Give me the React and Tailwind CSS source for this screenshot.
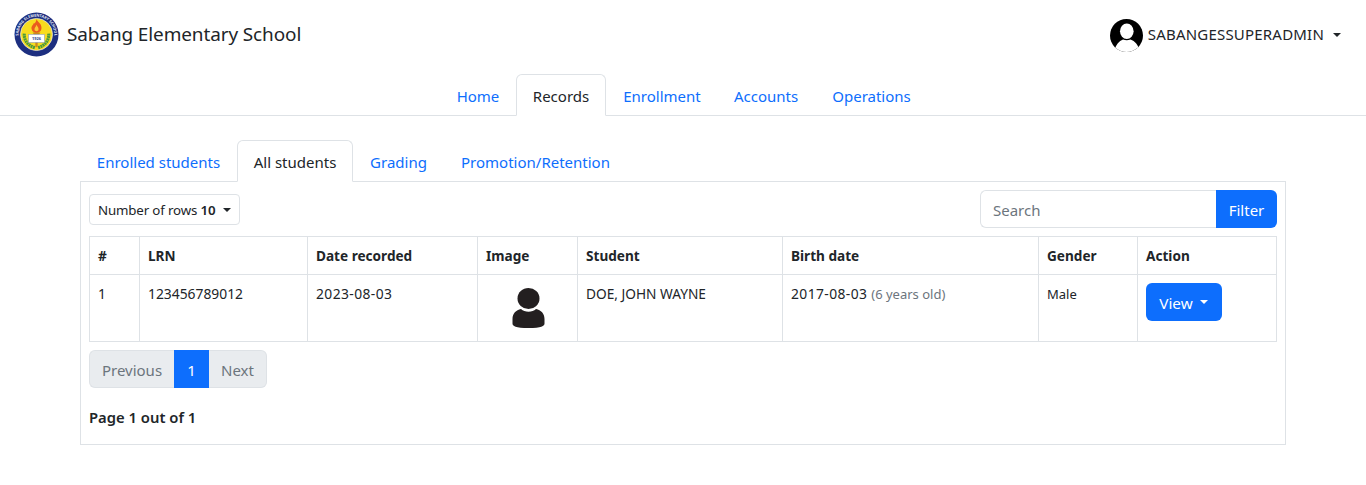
import React from "react";

const Caret = ({ className = "" }) => (
  <span className={`inline-block w-0 h-0 border-t-[4.8px] border-x-[4.8px] border-x-transparent border-t-current ${className}`} />
);

const Logo = () => (
  <svg width="45" height="45" viewBox="0 0 46 46" className="shrink-0">
    <defs>
      <path id="ringTop" d="M5.700 29a18.300 18.300 0 1 1 34.600 0" />
    </defs>
    <circle cx="23" cy="23" r="22.500" fill="#1d2f80" />
    <text fill="#e6e9f4" fontSize="3.900" fontWeight="700" fontFamily="'Noto Sans',sans-serif">
      <textPath href="#ringTop" startOffset="50%" textAnchor="middle">SABANG ELEMENTARY SCHOOL</textPath>
    </text>
    <circle cx="23" cy="23" r="16.400" fill="#f8dc1f" stroke="#e9edf5" strokeWidth=".7" />
    <path d="M10.500 22c-.5 7 4 12.500 11 14.500M35.500 22c.5 7-4 12.500-11 14.500" fill="none" stroke="#4b9a3d" strokeWidth="3.200" strokeDasharray="2 .5" />
    <path d="M23 7.500c1 3 6 4.500 5 10-.5 2.500-2.500 4-5 4s-4.500-1.500-5-4c-.6-3.500 1.500-3.500 2-6 1 1 2.500-1 3-4z" fill="#ea5b1d" />
    <path d="M23 13c1 2.200 2.500 3 2 5.500-.3 1.500-3.700 1.500-4 0-.4-2.500 1.500-3.300 2-5.500z" fill="#fbc933" />
    <path d="M19 21h8l-2 3h-4z" fill="#c98a1c" />
    <rect x="21.800" y="29" width="2.400" height="7" fill="#c98a1c" />
    <rect x="15" y="23" width="16" height="8" fill="#ffffff" stroke="#8ea0cc" strokeWidth=".6" />
    <text x="23" y="28.600" textAnchor="middle" fontSize="4" fontWeight="700" fill="#27408b" fontFamily="'Noto Sans',sans-serif">1926</text>
  </svg>
);

const Avatar = () => (
  <svg width="33" height="33" viewBox="0 0 33 33" className="shrink-0">
    <defs>
      <clipPath id="av"><circle cx="16.500" cy="16.500" r="16.500" /></clipPath>
    </defs>
    <g clipPath="url(#av)">
      <rect width="33" height="33" fill="#000" />
      <ellipse cx="16.800" cy="12.200" rx="6.800" ry="7.800" fill="#fff" />
      <path d="M3.500 33C6 26 9 22 13 20.600c2.500 1 5 1 7.500 0C25 22 28 26 30.500 33z" fill="#fff" />
    </g>
  </svg>
);

const Person = () => (
  <svg width="33" height="40" viewBox="0 0 33 40">
    <ellipse cx="16.500" cy="10.500" rx="11" ry="10.500" fill="#231f20" />
    <path d="M9 21c2 1.800 4.500 2.700 7.500 2.700s5.500-.9 7.500-2.700c5 1 8.500 4.500 8.500 10v4.500c0 2.500-3 4.500-16 4.500S.5 38 .5 35.500V31c0-5.500 3.500-9 8.500-10z" fill="#231f20" />
  </svg>
);

const Tab = ({ children, active, width }) => (
  <a
    className={`${width} shrink-0 pt-[2px] h-[42px] flex items-center justify-center -mb-px ${
      active
        ? "rounded-t-md border border-[#dee2e6] border-b-white bg-white text-[#212529]"
        : "border border-transparent text-[#0d6efd]"
    }`}
  >
    {children}
  </a>
);

const th = "border border-[#dee2e6] px-2 pt-[2px] h-[38px] text-left font-bold align-middle text-[13.6px]";
const td = "border border-[#dee2e6] px-2 pt-[9px] align-top font-normal";
const date = "text-[13.850px] tracking-[0.4px]";

export default function App() {
  return (
    <div className="min-h-[485px] bg-white text-[#212529] text-[15px] font-['Noto_Sans',sans-serif]">
      <header className="h-[74px] flex items-center justify-between pl-[14px] pr-[25px] pb-[5px]">
        <div className="flex items-center gap-2">
          <Logo />
          <span className="text-[18.950px] tracking-[-0.1px]">Sabang Elementary School</span>
        </div>
        <div className="flex items-center pt-[2px]">
          <Avatar />
          <span className="ml-[5px] -mt-[2px] text-[15px] tracking-[0.2px]">SABANGESSUPERADMIN</span>
          <Caret className="ml-[9px] -mt-[2px]" />
        </div>
      </header>

      <nav className="flex justify-center pl-[1px] border-b border-[#dee2e6] h-[42px]">
        <Tab width="w-[76px]">Home</Tab>
        <Tab active width="w-[90px]">Records</Tab>
        <Tab width="w-[110px] pl-[2px]">Enrollment</Tab>
        <Tab width="w-[99px] pl-px">Accounts</Tab>
        <Tab width="w-[112px] pl-px">Operations</Tab>
      </nav>

      <main className="px-[80px] pt-[24px]">
        <div className="flex border-b border-[#dee2e6] h-[42px]">
          <Tab width="w-[157px]">Enrolled students</Tab>
          <Tab active width="w-[116px]">All students</Tab>
          <Tab width="w-[91px]">Grading</Tab>
          <Tab width="w-[183px]">Promotion/Retention</Tab>
        </div>

        <section className="border border-t-0 border-[#dee2e6] px-2 pt-2 h-[263px]">
          <div className="flex items-center justify-between h-[38px]">
            <button className="h-[31px] w-[151px] flex items-center pl-2 pt-[3px] rounded border border-[#dee2e6] text-[13.300px] tracking-[-0.15px] whitespace-nowrap">
              Number of rows&nbsp;<b className="font-semibold">10</b>
              <Caret className="ml-[8px] -mt-[2px]" />
            </button>
            <div className="flex h-[38px] w-[297px]">
              <div className="flex-1 flex items-center pl-3 pt-[2px] border border-r-0 border-[#dee2e6] rounded-l-md text-[#6c757d]">Search</div>
              <button className="w-[61px] pt-[2px] bg-[#0d6efd] text-white rounded-r-md">Filter</button>
            </div>
          </div>

          <table className="mt-2 w-[1188px] table-fixed border-collapse text-[13px]">
            <colgroup>
              <col className="w-[50px]" />
              <col className="w-[168px]" />
              <col className="w-[170px]" />
              <col className="w-[100px]" />
              <col className="w-[205px]" />
              <col className="w-[256px]" />
              <col className="w-[99px]" />
              <col className="w-[139px]" />
            </colgroup>
            <thead>
              <tr>
                <th className={th}>#</th>
                <th className={th}>LRN</th>
                <th className={th}>Date recorded</th>
                <th className={th}>Image</th>
                <th className={th}>Student</th>
                <th className={th}>Birth date</th>
                <th className={th}>Gender</th>
                <th className={th}>Action</th>
              </tr>
            </thead>
            <tbody>
              <tr className="h-[67px]">
                <td className={`${td} text-[13.850px]`}>1</td>
                <td className={`${td} text-[13.850px]`}>123456789012</td>
                <td className={`${td} ${date}`}>2023-08-03</td>
                <td className={`${td} !pt-[13px]`}>
                  <div className="flex justify-center pl-px"><Person /></div>
                </td>
                <td className={`${td} text-[13.700px]`}>DOE, JOHN WAYNE</td>
                <td className={`${td} ${date}`}>
                  2017-08-03 <span className="text-[#6c757d] text-[13px] tracking-normal">(6 years old)</span>
                </td>
                <td className={`${td} !pt-[10px]`}>Male</td>
                <td className={`${td} !pt-2`}>
                  <button className="w-[76px] h-[38px] pt-[2px] pr-px flex items-center justify-center rounded-md bg-[#0d6efd] text-white text-[15.300px]">
                    View<Caret className="ml-[7px] -mt-[2px]" />
                  </button>
                </td>
              </tr>
            </tbody>
          </table>

          <div className="mt-2 flex h-[38px] w-[178px]">
            <div className="w-[85px] pt-[2px] flex items-center justify-center bg-[#e9ecef] border border-r-0 border-[#dee2e6] rounded-l-md text-[#6c757d]">Previous</div>
            <div className="w-[35px] pt-[2px] flex items-center justify-center bg-[#0d6efd] text-white">1</div>
            <div className="w-[58px] pt-[2px] flex items-center justify-center bg-[#e9ecef] border border-l-0 border-[#dee2e6] rounded-r-md text-[#6c757d]">Next</div>
          </div>

          <p className="mt-[18px] text-[14.800px] font-semibold leading-[22px]">Page 1 out of 1</p>
        </section>
      </main>
    </div>
  );
}
